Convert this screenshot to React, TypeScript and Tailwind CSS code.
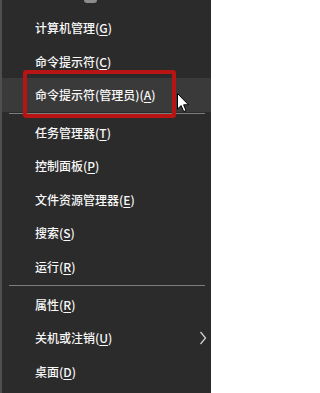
import React from "react";

type Item = { pre: string; key: string; post?: string; sub?: boolean; hl?: boolean };

const groups: Item[][] = [
  [
    { pre: "计算机管理(", key: "G", post: ")" },
    { pre: "命令提示符(", key: "C", post: ")" },
    { pre: "命令提示符(管理员)(", key: "A", post: ")", hl: true },
  ],
  [
    { pre: "任务管理器(", key: "T", post: ")" },
    { pre: "控制面板(", key: "P", post: ")" },
    { pre: "文件资源管理器(", key: "E", post: ")" },
    { pre: "搜索(", key: "S", post: ")" },
    { pre: "运行(", key: "R", post: ")" },
  ],
  [
    { pre: "属性(", key: "R", post: ")" },
    { pre: "关机或注销(", key: "U", post: ")", sub: true },
    { pre: "桌面(", key: "D", post: ")" },
  ],
];

function Row({ it }: { it: Item }) {
  return (
    <div
      className={`h-[33.5px] flex items-center justify-between pl-[33px] pr-[4px] text-[12px] font-medium text-[#f8f8f8] ${
        it.hl ? "bg-[#3a3a3a]" : ""
      }`}
    >
      <span className="whitespace-nowrap leading-none">
        {it.pre}
        <span className="underline underline-offset-[2px]">{it.key}</span>
        {it.post}
      </span>
      {it.sub && (
        <svg width="8" height="14" viewBox="0 0 8 14">
          <polyline points="1.5,1 6.5,7 1.5,13" fill="none" stroke="#cfcfcf" strokeWidth="1.3" />
        </svg>
      )}
    </div>
  );
}

export default function App() {
  return (
    <div
      className="relative w-[211px] h-[393px] bg-[#2b2b2b] border-l-2 border-[#4f4f4f] overflow-hidden"
      style={{ fontFamily: '"Noto Sans CJK SC", "Noto Sans", sans-serif' }}
    >
      <div className="absolute left-[82px] top-0 w-[13px] h-[3px] bg-[#8c8c8c] rounded-b-full" />
      <div className="pt-[11.25px] flex flex-col">
        {groups.map((g, gi) => (
          <React.Fragment key={gi}>
            {gi > 0 && (
              <div className="h-[4.25px] flex items-center pl-[7px] pr-[6px]">
                <div className="h-px w-full bg-[#7d7d7d]" />
              </div>
            )}
            {g.map((it, i) => (
              <Row key={i} it={it} />
            ))}
          </React.Fragment>
        ))}
      </div>
      <div className="absolute left-[21px] top-[70px] w-[153px] h-[48px] border-[4px] border-[#b81414] rounded-[3px]" />
      <svg
        className="absolute left-[175px] top-[93px]"
        width="13"
        height="20"
        viewBox="0 0 13 20"
      >
        <path
          d="M0.5 0.5 L0.5 16 L4.2 12.6 L6.7 18.6 L9 17.6 L6.6 11.8 L11.5 11.8 Z"
          fill="#ffffff"
          stroke="#000000"
          strokeWidth="1"
        />
      </svg>
    </div>
  );
}
